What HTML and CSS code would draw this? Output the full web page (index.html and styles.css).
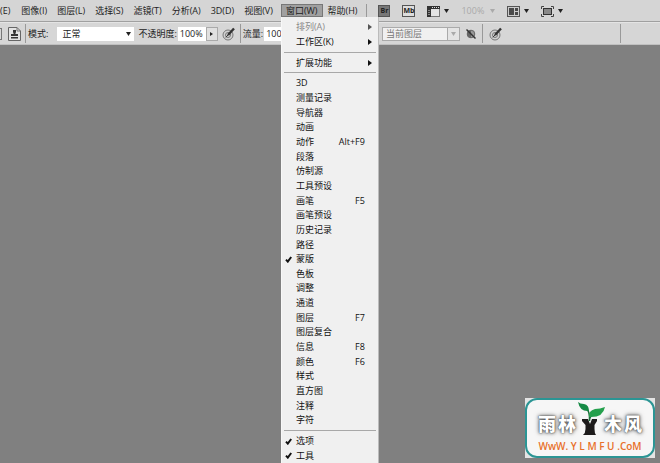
FILE: index.html
```html
<!DOCTYPE html>
<html lang="zh-CN">
<head>
<meta charset="utf-8">
<title>窗口菜单</title>
<link rel="stylesheet" href="styles.css">
</head>
<body>
<header class="menubar">
  <nav class="menus">
    <button class="menu-title first">(E)</button>
    <button class="menu-title">图像(I)</button>
    <button class="menu-title">图层(L)</button>
    <button class="menu-title">选择(S)</button>
    <button class="menu-title">滤镜(T)</button>
    <button class="menu-title">分析(A)</button>
    <button class="menu-title">3D(D)</button>
    <button class="menu-title">视图(V)</button>
    <div class="open-menu">
      <button class="menu-title active" aria-expanded="true">窗口(W)</button>
      <div class="dropdown" role="menu">
        <button class="item dim" role="menuitem">排列(A)<svg class="sub" viewBox="0 0 4 6"><path d="M0 0L4 3L0 6Z"/></svg></button>
        <button class="item" role="menuitem">工作区(K)<svg class="sub" viewBox="0 0 4 6"><path d="M0 0L4 3L0 6Z"/></svg></button>
        <hr>
        <button class="item" role="menuitem">扩展功能<svg class="sub" viewBox="0 0 4 6"><path d="M0 0L4 3L0 6Z"/></svg></button>
        <hr>
        <button class="item" role="menuitem">3D</button>
        <button class="item" role="menuitem">测量记录</button>
        <button class="item" role="menuitem">导航器</button>
        <button class="item" role="menuitem">动画</button>
        <button class="item" role="menuitem">动作<span class="key">Alt+F9</span></button>
        <button class="item" role="menuitem">段落</button>
        <button class="item" role="menuitem">仿制源</button>
        <button class="item" role="menuitem">工具预设</button>
        <button class="item" role="menuitem">画笔<span class="key">F5</span></button>
        <button class="item" role="menuitem">画笔预设</button>
        <button class="item" role="menuitem">历史记录</button>
        <button class="item" role="menuitem">路径</button>
        <button class="item" role="menuitem"><svg class="check" viewBox="0 0 7 7"><path d="M1 3.6L2.8 5.6L6.2 1"/></svg>蒙版</button>
        <button class="item" role="menuitem">色板</button>
        <button class="item" role="menuitem">调整</button>
        <button class="item" role="menuitem">通道</button>
        <button class="item" role="menuitem">图层<span class="key">F7</span></button>
        <button class="item" role="menuitem">图层复合</button>
        <button class="item" role="menuitem">信息<span class="key">F8</span></button>
        <button class="item" role="menuitem">颜色<span class="key">F6</span></button>
        <button class="item" role="menuitem">样式</button>
        <button class="item" role="menuitem">直方图</button>
        <button class="item" role="menuitem">注释</button>
        <button class="item" role="menuitem">字符</button>
        <hr>
        <button class="item" role="menuitem"><svg class="check" viewBox="0 0 7 7"><path d="M1 3.6L2.8 5.6L6.2 1"/></svg>选项</button>
        <button class="item" role="menuitem"><svg class="check" viewBox="0 0 7 7"><path d="M1 3.6L2.8 5.6L6.2 1"/></svg>工具</button>
      </div>
    </div>
    <button class="menu-title">帮助(H)</button>
  </nav>
  <div class="apps">
    <button class="app bridge">Br</button>
    <button class="app mini">Mb</button>
    <button class="tool" aria-label="查看额外内容">
      <svg width="13" height="12" viewBox="0 0 13 12"><rect x=".5" y="1.5" width="12" height="10" fill="#e4e4e4" stroke="#777"/><path d="M0 1H13V4H0ZM0 1H4V12H0Z" fill="#333"/><path d="M5 2.5H12M2 5V11" stroke="#ddd" stroke-dasharray="1 1"/></svg>
      <svg class="arrow" viewBox="0 0 5 4"><path d="M0 0H5L2.5 4Z"/></svg>
    </button>
    <button class="tool faded">100%
      <svg class="arrow" viewBox="0 0 5 4"><path d="M0 0H5L2.5 4Z"/></svg>
    </button>
    <button class="tool" aria-label="排列文档">
      <svg width="13" height="12" viewBox="0 0 13 12"><rect x=".5" y="1.5" width="12" height="10" fill="#ccc" stroke="#555"/><path d="M2 3H7V10H2ZM8 3H11V6H8ZM8 7H11V10H8Z" fill="#4a4a4a"/></svg>
      <svg class="arrow" viewBox="0 0 5 4"><path d="M0 0H5L2.5 4Z"/></svg>
    </button>
    <button class="tool" aria-label="屏幕模式">
      <svg width="13" height="12" viewBox="0 0 13 12"><rect x="2.5" y="3.5" width="8" height="6" fill="#888" stroke="#333"/><path d="M.5 4V1.5H3M10 1.5H12.500V4M12.500 9V11.500H10M3 11.500H.5V9" fill="none" stroke="#444"/></svg>
      <svg class="arrow" viewBox="0 0 5 4"><path d="M0 0H5L2.5 4Z"/></svg>
    </button>
  </div>
</header>

<section class="options">
  <div class="group left">
    <span class="edge"></span>
    <button class="icon" aria-label="仿制源面板">
      <svg width="13" height="14" viewBox="0 0 13 14"><path d="M.5 .5H9L12.500 4V13.500H.5Z" fill="#e2e2e2" stroke="#666"/><path d="M5 3H8V5L7.300 7H10V9H3V7H5.700L5 5ZM3 10H10V11.500H3Z" fill="#333"/><path d="M9 .5V4H12.500" fill="none" stroke="#777"/></svg>
    </button>
    <span class="rule"></span>
    <label for="mode">模式:</label>
    <span class="combo mode"><select id="mode"><option>正常</option></select><svg class="arrow" viewBox="0 0 5 4"><path d="M0 0H5L2.5 4Z"/></svg></span>
    <label for="opacity">不透明度:</label>
    <span class="stepper"><input id="opacity" value="100%"><button aria-label="不透明度滑块"><svg class="right" viewBox="0 0 4 6"><path d="M0 1L3 3L0 5Z"/></svg></button></span>
    <button class="icon" aria-label="不透明度压力">
      <svg width="14" height="14" viewBox="0 0 14 14"><circle cx="6" cy="8" r="5" fill="#d0d0d0" stroke="#777"/><circle cx="6" cy="8" r="2.500" fill="none" stroke="#777"/><path d="M6 8L12 1.500" stroke="#333" stroke-width="2.400"/><path d="M3.800 10.300L6.500 7.500" stroke="#333"/></svg>
    </button>
    <span class="rule"></span>
    <label for="flow">流量:</label>
    <span class="stepper"><input id="flow" value="100%"><button aria-label="流量滑块"><svg class="right" viewBox="0 0 4 6"><path d="M0 1L3 3L0 5Z"/></svg></button></span>
  </div>
  <div class="group right-group">
    <span class="combo sample"><select aria-label="样本"><option>当前图层</option></select><svg class="arrow" viewBox="0 0 5 4"><path d="M0 0H5L2.5 4Z"/></svg></span>
    <button class="icon" aria-label="忽略调整图层">
      <svg width="10" height="12" viewBox="0 0 10 12"><circle cx="5" cy="6" r="3.800" fill="#999" stroke="#666"/><path d="M5 2.200A3.800 3.800 0 0 0 5 9.800Z" fill="#666"/><path d="M.5 1.500L9.500 10.500" stroke="#333" stroke-width="1.500"/></svg>
    </button>
    <span class="rule"></span>
    <button class="icon" aria-label="大小压力">
      <svg width="14" height="14" viewBox="0 0 14 14"><circle cx="6" cy="8" r="5" fill="#d0d0d0" stroke="#777"/><circle cx="6" cy="8" r="2.500" fill="none" stroke="#777"/><path d="M6 8L12 1.500" stroke="#333" stroke-width="2.400"/><path d="M3.800 10.300L6.500 7.500" stroke="#333"/></svg>
    </button>
  </div>
  <span class="rule end"></span>
</section>

<main class="canvas">
  <div class="badge">
    <div class="badge-frame">
      <div class="badge-name">
        <span>雨</span><span>林</span>
        <svg width="30" height="35" viewBox="0 0 30 35"><path d="M7 18H13L15 23L17 18H22V20L19.500 24V28Q19.500 32 21 34H8Q10.500 32 10.500 28V24L7 20Z" fill="#1d1b1b"/><path d="M14.500 20Q15 12 12 8M14.500 19Q15 14 20 12" fill="none" stroke="#1d6b3a" stroke-width="1.500"/><path d="M3 1Q5 3 9 3Q14 4 14 10Q5 11 3 1Z" fill="#168a45"/><path d="M30 6Q28 17 14 16Q13 10 20 8Q25 8 30 6Z" fill="#25a04d"/></svg>
        <span>木</span><span>风</span>
      </div>
      <div class="badge-url">WwW. Y L M F U .CoM</div>
    </div>
  </div>
</main>
</body>
</html>
```

FILE: styles.css
```css
* {
  box-sizing: border-box;
}

body {
  margin: 0;
  min-height: 100vh;
  display: flex;
  flex-direction: column;
  overflow: hidden;
  background: #808080;
  color: #222;
  font: 9px/12px "Open Sans", "Noto Sans CJK SC", sans-serif;
}

button,
input,
select {
  margin: 0;
  padding: 0;
  border: 0;
  border-radius: 0;
  background: none;
  color: inherit;
  font: inherit;
  appearance: none;
}

svg {
  display: block;
  flex: none;
}

.menubar {
  display: flex;
  align-items: center;
  height: 22px;
  background: #d5d5d5;
  border-bottom: 1px solid #a0a0a0;
}

.menus {
  display: flex;
  align-items: center;
  padding-right: 4px;
  border-right: 1px solid #999;
}

.menu-title {
  height: 13px;
  padding: 0 5px;
  white-space: nowrap;
}

.first {
  padding-left: 0;
  padding-right: 6px;
}

.active {
  background: #a0a0a0;
  outline: 1px solid #777;
  outline-offset: -1px;
}

.open-menu {
  position: relative;
  display: flex;
  margin-left: 3px;
}

.dropdown {
  position: absolute;
  z-index: 2;
  top: 13px;
  left: 0;
  width: 98px;
  height: calc(100vh - 17px);
  padding-top: 3px;
  display: flex;
  flex-direction: column;
  background: #f0f0f0;
  border-left: 1px solid #f8f8f8;
  border-right: 1px solid #bbb;
}

.item {
  position: relative;
  flex: 1;
  min-height: 0;
  padding: 0 13px 0 14px;
  display: flex;
  align-items: center;
  justify-content: space-between;
  text-align: left;
  color: #111;
}

.dim {
  color: #8a8a8a;
}

.sub {
  width: 4px;
  height: 6px;
  margin-right: -7px;
}

.dim .sub {
  color: #555;
}

.check {
  position: absolute;
  left: 3px;
  width: 7px;
  height: 7px;
  fill: none;
  stroke: #111;
  stroke-width: 2;
}

.dropdown hr {
  width: 92px;
  height: 6px;
  margin: 0 2px;
  border: 0;
  background: linear-gradient(#a8a8a8, #a8a8a8) center / 100% 1px no-repeat;
}

.apps {
  display: flex;
  align-items: center;
  gap: 12px;
  padding-left: 11px;
}

.app {
  width: 12px;
  height: 12px;
  font-size: 7px;
  line-height: 10px;
  font-weight: 700;
  text-align: center;
  border: 1px solid #555;
}

.bridge {
  background: #777;
  color: #222;
}

.mini {
  width: 13px;
  background: #ddd;
}

.tool {
  display: flex;
  align-items: center;
  gap: 4px;
}

.faded {
  gap: 6px;
  color: #aaa;
}

.arrow {
  width: 5px;
  height: 4px;
}

.sub,
.arrow,
.right {
  fill: currentColor;
}

.options {
  display: flex;
  align-items: center;
  height: 23px;
  background: #d6d6d6;
  border-top: 1px solid #e4e4e4;
  border-bottom: 1px solid #c0c0c0;
}

.group {
  display: flex;
  align-items: center;
  gap: 4px;
  white-space: nowrap;
}

.left {
  width: 382px;
}

.right-group {
  gap: 6px;
}

.edge {
  width: 2px;
  height: 12px;
  margin-right: 2px;
  border: 1px solid #777;
  border-left: 0;
}

.rule {
  width: 1px;
  height: 19px;
  background: #999;
}

.left .rule {
  margin-right: -2px;
}

.end {
  margin-left: auto;
  margin-right: 39px;
}

.combo {
  display: grid;
  grid-template-columns: 1fr 12px;
  align-items: center;
  height: 14px;
  background: #fff;
}

.combo select {
  grid-area: 1 / 1 / 2 / 3;
  height: 14px;
  padding-left: 5px;
}

.combo .arrow {
  grid-area: 1 / 2;
  justify-self: center;
  pointer-events: none;
}

.mode {
  width: 77px;
  margin-left: 5px;
}

.sample {
  width: 78px;
  background: linear-gradient(90deg, #f0f0f0 64px, #aaa 64px, #aaa 65px, #e4e4e4 65px);
  border: 1px solid #aaa;
  color: #777;
}

.sample select {
  height: 12px;
  padding-left: 3px;
}

.sample .arrow {
  color: #aaa;
}

.stepper {
  display: flex;
  height: 14px;
  margin-left: -3px;
}

.stepper input {
  width: 28px;
  padding-left: 2px;
  background: #fff;
}

.stepper button {
  width: 12px;
  display: grid;
  place-items: center;
  border: 1px solid #aaa;
  background: #e0e0e0;
}

.right {
  width: 4px;
  height: 6px;
}

.canvas {
  flex: 1;
  display: flex;
  align-items: flex-end;
  justify-content: flex-end;
  padding: 5px;
}

.badge {
  width: 130px;
  background: #e4e4e4;
}

.badge-frame {
  height: 60px;
  border: 2px solid #2b9594;
  border-radius: 12px;
  background: #f6f6f6;
}

.badge-name {
  display: flex;
  align-items: center;
  justify-content: center;
  height: 40px;
  padding-top: 8px;
  color: #fff;
  font-size: 18px;
  line-height: 20px;
  font-weight: 900;
  text-shadow: 0 0 1px #444, 0 0 3px #555, 0 0 5px #777;
}

.badge-name svg {
  align-self: flex-start;
  margin: -7px -2px 0;
}

.badge-name span {
  width: 20px;
  text-align: center;
}

.badge-url {
  color: #e8702a;
  font-size: 10px;
  line-height: 12px;
  font-weight: 600;
  text-align: center;
}
```
